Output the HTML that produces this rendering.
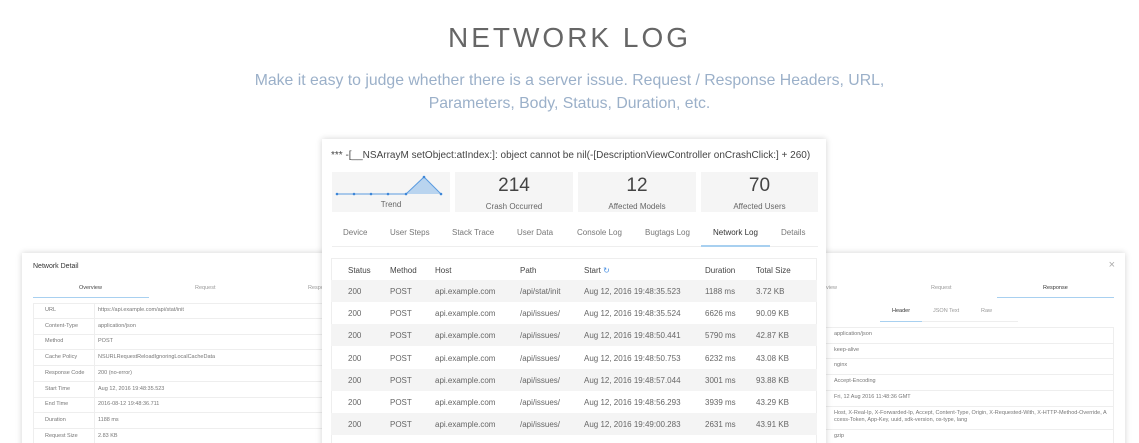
<!DOCTYPE html>
<html><head><meta charset="utf-8"><style>
*{margin:0;padding:0;box-sizing:border-box}
html,body{width:1139px;height:443px;overflow:hidden}
body{background:#fff;font-family:"Liberation Sans",sans-serif;position:relative;color:#555}
#wrap{position:absolute;left:0;top:0;width:1139px;height:443px;overflow:hidden}
.abs{position:absolute;white-space:nowrap}
h1{position:absolute;top:22px;left:0;width:1139px;text-align:center;font-weight:normal;font-size:28px;letter-spacing:3px;color:#666}
.sub{position:absolute;top:69px;left:0;width:1139px;text-align:center;font-size:15.8px;line-height:23px;color:#9bb0c9}
.card{position:absolute;background:#fff;box-shadow:0 0 6px rgba(0,0,0,.18)}
.stat{position:absolute;top:33px;height:40px;background:#f5f5f5;text-align:center}
.stat b{display:block;font-weight:normal;font-size:19px;color:#444;margin-top:4px;line-height:20px}
.stat span{font-size:8px;color:#666}
.tab{position:absolute;top:89px;font-size:8px;color:#777}
.row{position:absolute;left:9px;width:486px;height:22px;font-size:8px;color:#666}
.row span{position:absolute;top:7px}
.sh{background:#f4f4f4}
.lt{position:absolute;font-size:5.5px;color:#777}
</style></head><body><div id="wrap">
<h1>NETWORK LOG</h1>
<div class="sub">Make it easy to judge whether there is a server issue. Request / Response Headers, URL,<br>Parameters, Body, Status, Duration, etc.</div>

<!-- left card -->
<div class="card" style="left:22px;top:253px;width:310px;height:200px">
<div class="abs" style="left:11px;top:10px;font-size:7px;color:#333">Network Detail</div>
<div class="lt" style="left:57px;top:32px;color:#444">Overview</div>
<div class="lt" style="left:173px;top:32px;color:#999">Request</div>
<div class="lt" style="left:286px;top:32px;color:#999">Respo</div>
<div class="abs" style="left:11px;top:44px;width:116px;height:1px;background:#a8d0f0"></div>
<div class="abs" style="left:11px;top:50px;width:300px;height:160px;border:1px solid #eee"></div>
<div class="abs" style="left:72px;top:50px;width:1px;height:160px;background:#eee"></div>
</div>
<div id="lrows"></div>

<!-- right card -->
<div class="card" style="left:816px;top:253px;width:309px;height:200px">
<div class="abs" style="right:10px;top:6px;font-size:11px;color:#aaa">×</div>
<div class="lt" style="left:10px;top:32px;color:#999">view</div>
<div class="lt" style="left:115px;top:32px;color:#999">Request</div>
<div class="lt" style="left:227px;top:32px;color:#333">Response</div>
<div class="abs" style="left:181px;top:44px;width:117px;height:1px;background:#a8d0f0"></div>
<div class="lt" style="left:76px;top:55px;color:#333">Header</div>
<div class="lt" style="left:117px;top:55px;color:#999">JSON Text</div>
<div class="lt" style="left:165px;top:55px;color:#999">Raw</div>
<div class="abs" style="left:64px;top:68px;width:42px;height:1px;background:#a8d0f0"></div>
<div class="abs" style="left:106px;top:68px;width:96px;height:1px;background:#eee"></div>
</div>
<div id="rrows"></div>

<!-- center card -->
<div class="card" style="left:322px;top:139px;width:504px;height:320px">
<div class="abs" style="left:9px;top:11px;font-size:10px;color:#444">*** -[__NSArrayM setObject:atIndex:]: object cannot be nil(-[DescriptionViewController onCrashClick:] + 260)</div>
<div class="stat" style="left:10px;width:118px">
<svg width="118" height="30" style="position:absolute;left:0;top:0"><polygon points="74,22 92,5 109,22" fill="#b9d4ef"/><polyline points="5,22 22,22 39,22 56,22 74,22 92,5 109,22" fill="none" stroke="#5a9be0" stroke-width="1"/><g fill="#3d86d8"><circle cx="5" cy="22" r="1.3"/><circle cx="22" cy="22" r="1.3"/><circle cx="39" cy="22" r="1.3"/><circle cx="56" cy="22" r="1.3"/><circle cx="74" cy="22" r="1.3"/><circle cx="92" cy="5" r="1.3"/><circle cx="109" cy="22" r="1.3"/></g></svg>
<span style="position:absolute;left:0;width:118px;top:28px">Trend</span></div>
<div class="stat" style="left:133px;width:118px"><b>214</b><span>Crash Occurred</span></div>
<div class="stat" style="left:256px;width:118px"><b>12</b><span>Affected Models</span></div>
<div class="stat" style="left:379px;width:117px"><b>70</b><span>Affected Users</span></div>
<div class="tab" style="left:21px">Device</div>
<div class="tab" style="left:68px">User Steps</div>
<div class="tab" style="left:130px">Stack Trace</div>
<div class="tab" style="left:195px">User Data</div>
<div class="tab" style="left:255px">Console Log</div>
<div class="tab" style="left:323px">Bugtags Log</div>
<div class="tab" style="left:391px;color:#333">Network Log</div>
<div class="tab" style="left:459px">Details</div>
<div class="abs" style="left:10px;top:107px;width:486px;height:1px;background:#eee"></div>
<div class="abs" style="left:379px;top:106px;width:69px;height:2px;background:#a8d0f0"></div>
<div class="abs" style="left:9px;top:119px;width:486px;height:210px;border:1px solid #eee"></div>
<div class="row" style="top:120px;color:#444"><span style="left:17px">Status</span><span style="left:59px">Method</span><span style="left:104px">Host</span><span style="left:189px">Path</span><span style="left:253px">Start <span style="color:#4a90e2;position:static">&#x21bb;</span></span><span style="left:374px">Duration</span><span style="left:425px">Total Size</span></div>
</div>
<div id="crows"></div>
</div>
<script>
var d=[["/api/stat/init","48:35.523","1188","3.72"],["/api/issues/","48:35.524","6626","90.09"],["/api/issues/","48:50.441","5790","42.87"],["/api/issues/","48:50.753","6232","43.08"],["/api/issues/","48:57.044","3001","93.88"],["/api/issues/","48:56.293","3939","43.29"],["/api/issues/","49:00.283","2631","43.91"],["/api/issues/","49:03.112","2010","43.50"]];
var h="";
d.forEach(function(r,i){var t="Aug 12, 2016 19:"+r[1];
h+='<div class="row'+(i%2==0?' sh':'')+'" style="left:331px;top:'+(280+i*22.2)+'px"><span style="left:17px">200</span><span style="left:59px">POST</span><span style="left:104px">api.example.com</span><span style="left:189px">'+r[0]+'</span><span style="left:253px">'+t+'</span><span style="left:374px">'+r[2]+' ms</span><span style="left:425px">'+r[3]+' KB</span></div>';});
document.getElementById("crows").innerHTML=h;
var L=[["URL","https://api.example.com/api/stat/init"],["Content-Type","application/json"],["Method","POST"],["Cache Policy","NSURLRequestReloadIgnoringLocalCacheData"],["Response Code","200 (no-error)"],["Start Time","Aug 12, 2016 19:48:35.523"],["End Time","2016-08-12 19:48:36.711"],["Duration","1188 ms"],["Request Size","2.83 KB"]];
var g="";L.forEach(function(r,i){var y=303+i*15.7;g+='<div class="lt" style="left:45px;top:'+(y+4)+'px">'+r[0]+'</div><div class="lt" style="left:98px;top:'+(y+4)+'px">'+r[1]+'</div><div class="abs" style="left:34px;top:'+(y+15)+'px;width:288px;height:1px;background:#eee"></div>';});
document.getElementById("lrows").innerHTML=g;
var R=["application/json","keep-alive","nginx","Accept-Encoding","Fri, 12 Aug 2016 11:48:36 GMT","Host, X-Real-Ip, X-Forwarded-Ip, Accept, Content-Type, Origin, X-Requested-With, X-HTTP-Method-Override, A<br>ccess-Token, App-Key, uuid, sdk-version, os-type, lang","gzip"];
var k='<div class="abs" style="left:826px;top:327px;width:288px;height:1px;background:#eee"></div>';var y=327;R.forEach(function(t,i){var hh=i==5?23:15.7;k+='<div class="lt" style="left:834px;top:'+(y+4)+'px;white-space:nowrap;line-height:7px">'+t+'</div><div class="abs" style="left:826px;top:'+(y+hh)+'px;width:288px;height:1px;background:#eee"></div>';y+=hh;});
k+='<div class="abs" style="left:1113px;top:327px;width:1px;height:120px;background:#eee"></div>';
document.getElementById("rrows").innerHTML=k;
</script>
</body></html>
